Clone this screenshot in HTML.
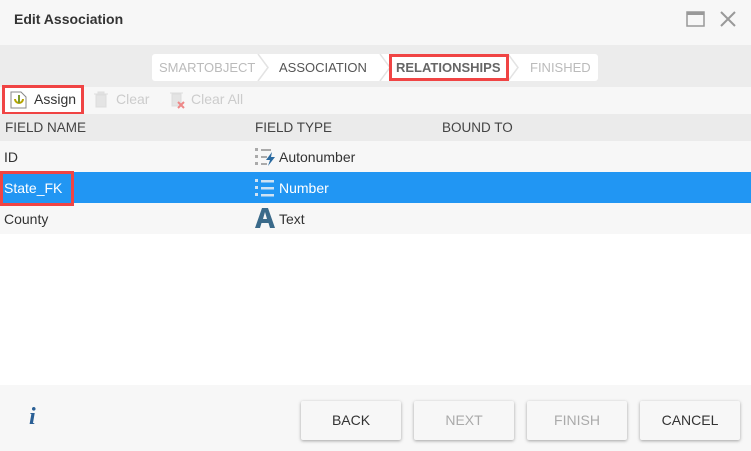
<!DOCTYPE html>
<html><head><style>
*{margin:0;padding:0;box-sizing:border-box}
body{width:751px;height:451px;overflow:hidden;background:#fff;font-family:"Liberation Sans",sans-serif;position:relative;font-size:14px;color:#333}
.a{position:absolute}
.t{white-space:nowrap}
.btn{position:absolute;top:401px;width:100px;height:39px;background:#f7f7f7;box-shadow:0 1px 3px rgba(0,0,0,.35);border-radius:2px;text-align:center;line-height:39px;font-size:14px;color:#333}
</style></head><body>
<div class="a" style="left:0;top:0;width:751px;height:45px;background:#f7f7f7"></div>
<div class="a t" style="left:14px;top:11px;font-size:14px;font-weight:bold;color:#333">Edit Association</div>
<svg class="a" style="left:686px;top:10px" width="20" height="18"><rect x="1" y="2" width="17" height="14" fill="none" stroke="#999" stroke-width="1.5"/><rect x="1" y="2" width="17" height="3" fill="#999"/></svg>
<svg class="a" style="left:719px;top:10px" width="18" height="18"><path d="M2 2L16 16M16 2L2 16" stroke="#999" stroke-width="2"/></svg>
<div class="a" style="left:0;top:45px;width:751px;height:42px;background:#ececec"></div>
<div class="a" style="left:152px;top:54px;width:446px;height:27px;background:#fff;border-radius:3px"></div>
<svg class="a" style="left:152px;top:54px" width="446" height="27"><g fill="none" stroke="#e3e3e3" stroke-width="1.5"><path d="M106 0L116 13.5L106 27"/><path d="M228 0L238 13.5L228 27"/><path d="M356 0L366 13.5L356 27"/></g></svg>
<div class="a t" style="left:159px;top:60px;font-size:13px;color:#bbb">SMARTOBJECT</div>
<div class="a t" style="left:279px;top:60px;font-size:13px;color:#555">ASSOCIATION</div>
<div class="a" style="left:389px;top:54px;width:120px;height:27px;border:3px solid #f04444"></div>
<div class="a t" style="left:396px;top:60px;font-size:13px;color:#666;font-weight:bold">RELATIONSHIPS</div>
<div class="a t" style="left:530px;top:60px;font-size:13px;color:#bbb">FINISHED</div>
<div class="a" style="left:0;top:87px;width:751px;height:27px;background:#f7f7f7"></div>
<div class="a" style="left:2px;top:85px;width:82px;height:30px;border:3px solid #f04444;background:#fff"></div>
<svg class="a" style="left:9px;top:90px" width="20" height="20"><path d="M2 2h10l5 5v11H2z" fill="#fff" stroke="#888"/><path d="M6 9a4 4 0 1 0 8 0" fill="none" stroke="#b5a400" stroke-width="2"/><path d="M10 5v8" stroke="#7a9a30" stroke-width="2"/></svg>
<div class="a t" style="left:34px;top:91px;font-size:14px;color:#333">Assign</div>
<svg class="a" style="left:93px;top:91px" width="16" height="17"><path d="M1 3h14M5 3V1h6v2M3 4h10v12H3z" fill="#e4e4e4" stroke="#ddd"/></svg>
<div class="a t" style="left:116px;top:91px;color:#ccc">Clear</div>
<svg class="a" style="left:168px;top:90px" width="20" height="20"><path d="M2 3h13M4 4h9v12H4z" fill="#e4e4e4" stroke="#ddd"/><path d="M10 12l6 6M16 12l-6 6" stroke="#e88" stroke-width="2"/></svg>
<div class="a t" style="left:191px;top:91px;color:#ccc">Clear All</div>
<div class="a" style="left:0;top:114px;width:751px;height:27px;background:#ebebeb"></div>
<div class="a t" style="left:5px;top:120px;color:#444;font-size:13.5px">FIELD NAME</div>
<div class="a t" style="left:255px;top:120px;color:#444;font-size:13.5px">FIELD TYPE</div>
<div class="a t" style="left:442px;top:120px;color:#444;font-size:13.5px">BOUND TO</div>
<div class="a" style="left:0;top:141px;width:751px;height:31px;background:#f7f7f7"></div>
<div class="a" style="left:0;top:172px;width:751px;height:31px;background:#2196f3"></div>
<div class="a" style="left:0;top:203px;width:751px;height:31px;background:#f7f7f7"></div>
<div class="a t" style="left:4px;top:149px">ID</div>
<div class="a" style="left:0;top:171px;width:74px;height:35px;border:3px solid #f04444"></div>
<div class="a t" style="left:4px;top:180px;color:#fff">State_FK</div>
<div class="a t" style="left:4px;top:211px">County</div>
<svg class="a" style="left:255px;top:147px" width="22" height="20"><g fill="#aaa"><rect x="0" y="1" width="3" height="3"/><rect x="0" y="8" width="3" height="3"/><rect x="0" y="15" width="3" height="3"/><rect x="6" y="2" width="10" height="2"/><rect x="6" y="9" width="6" height="2"/><rect x="6" y="16" width="6" height="2"/></g><path d="M17 5l-6 8h4l-2 6 7-9h-4z" fill="#2a6aa0"/></svg>
<div class="a t" style="left:279px;top:149px">Autonumber</div>
<svg class="a" style="left:255px;top:178px" width="22" height="20"><g fill="#cfe2f3"><rect x="0" y="1" width="3" height="3"/><rect x="0" y="8" width="3" height="3"/><rect x="0" y="15" width="3" height="3"/><rect x="6" y="2" width="13" height="2.5"/><rect x="6" y="9" width="13" height="2.5"/><rect x="6" y="16" width="13" height="2.5"/></g></svg>
<div class="a t" style="left:279px;top:180px;color:#fff">Number</div>
<svg class="a" style="left:255px;top:207px" width="20" height="22"><path d="M0 21L7 1h6l7 20h-5l-1.5-5h-7L5 21zM8 12h4l-2-7z" fill="#3a6a8a"/></svg>
<div class="a t" style="left:279px;top:211px">Text</div>
<div class="a" style="left:0;top:385px;width:751px;height:66px;background:#f7f7f7"></div>
<div class="a t" style="left:29px;top:404px;font-size:24px;font-weight:bold;font-style:italic;color:#2a5f95;font-family:'Liberation Serif',serif">i</div>
<div class="btn" style="left:301px">BACK</div>
<div class="btn" style="left:414px;color:#aaa">NEXT</div>
<div class="btn" style="left:527px;color:#aaa">FINISH</div>
<div class="btn" style="left:640px">CANCEL</div>
</body></html>
